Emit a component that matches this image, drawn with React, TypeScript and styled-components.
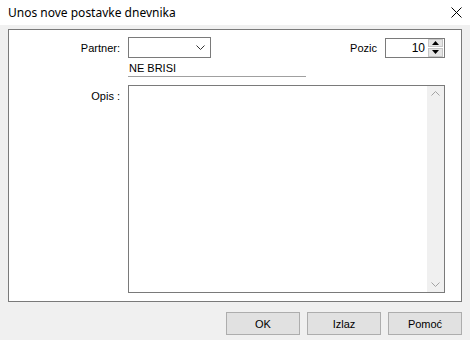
import React from 'react';
import styled, { createGlobalStyle } from 'styled-components';

const GlobalStyle = createGlobalStyle`
  html, body {
    margin: 0;
    padding: 0;
    background: #f0f0f0;
  }
  body {
    font-family: "Liberation Sans", Arial, sans-serif;
    font-size: 11px;
    color: #000;
  }
`;

const Window = styled.div`
  width: 470px;
  height: 340px;
  display: flex;
  flex-direction: column;
  background: #f0f0f0;
  overflow: hidden;
`;

const TitleBar = styled.div`
  height: 25px;
  flex: none;
  background: #fff;
  display: flex;
  align-items: center;
  justify-content: space-between;
  padding: 0 8px 0 8px;
`;

const Title = styled.span`
  font-family: "Noto Sans", "Open Sans", sans-serif;
  font-size: 12px;
  color: #000;
  line-height: 1;
`;

const CloseButton = styled.button`
  border: 0;
  background: transparent;
  padding: 0;
  width: 12px;
  height: 12px;
  display: flex;
  align-items: center;
  justify-content: center;
`;

const Body = styled.div`
  flex: 1;
  display: flex;
  flex-direction: column;
  padding: 4px 8px 0 8px;
`;

const Panel = styled.div`
  height: 273px;
  box-sizing: border-box;
  background: #fff;
  border: 1px solid #7a7a7a;
  padding: 7px 16px 0 0;
  display: grid;
  grid-template-columns: 119px 1fr;
  grid-template-rows: 21px 20px 208px;
  row-gap: 0;
`;

const Label = styled.label<{ $top?: number }>`
  text-align: right;
  padding-right: 8px;
  padding-top: ${(p) => p.$top ?? 0}px;
  align-self: ${(p) => (p.$top ? 'start' : 'center')};
  white-space: nowrap;
`;

const TopRow = styled.div`
  display: flex;
  align-items: center;
`;

const Combo = styled.div`
  width: 83px;
  height: 21px;
  box-sizing: border-box;
  border: 1px solid #7a7a7a;
  background: #fff;
  display: flex;
  align-items: center;
  justify-content: flex-end;
  padding-right: 5px;
`;

const PozicGroup = styled.div`
  margin-left: auto;
  display: flex;
  align-items: center;
  gap: 8px;
`;

const Spin = styled.div`
  width: 60px;
  height: 20px;
  box-sizing: border-box;
  border: 1px solid #7a7a7a;
  background: #fff;
  display: flex;
  align-items: center;
`;

const SpinValue = styled.span`
  flex: 1;
  text-align: right;
  padding-right: 3px;
  font-size: 12px;
`;

const SpinButtons = styled.div`
  width: 15px;
  height: 18px;
  display: flex;
  flex-direction: column;
  gap: 1px;
  margin-right: 1px;
`;

const SpinBtn = styled.div`
  flex: 1;
  background: #e5e5e5;
  border: 1px solid #c5c5c5;
  box-sizing: border-box;
  display: flex;
  align-items: center;
  justify-content: center;
`;

const Readonly = styled.div`
  margin-top: 4px;
  width: 178px;
  height: 15px;
  box-sizing: border-box;
  border-bottom: 1px solid #a0a0a0;
  padding-left: 1px;
  line-height: 13px;
`;

const Memo = styled.div`
  margin-top: 7px;
  height: 208px;
  box-sizing: border-box;
  border: 1px solid #7a7a7a;
  background: #fff;
  display: flex;
  justify-content: flex-end;
`;

const ScrollTrack = styled.div`
  width: 17px;
  background: #f0f0f0;
  display: flex;
  flex-direction: column;
  justify-content: space-between;
  align-items: center;
  padding: 5px 0;
`;

const Footer = styled.div`
  display: flex;
  justify-content: flex-end;
  gap: 7px;
  margin-top: 10px;
`;

const Button = styled.button`
  width: 74px;
  height: 23px;
  box-sizing: border-box;
  background: #e1e1e1;
  border: 1px solid #adadad;
  font-family: "Liberation Sans", Arial, sans-serif;
  font-size: 11px;
  color: #000;
  padding: 0;
`;

const Chevron = ({ up, color }: { up?: boolean; color: string }) => (
  <svg width="9" height="5" viewBox="0 0 9 5">
    <path
      d={up ? 'M0.5 4.5 L4.5 0.5 L8.5 4.5' : 'M0.5 0.5 L4.5 4.5 L8.5 0.5'}
      fill="none"
      stroke={color}
      strokeWidth="1"
    />
  </svg>
);

const Tri = ({ up }: { up?: boolean }) => (
  <svg width="7" height="4" viewBox="0 0 7 4">
    <path d={up ? 'M0 4 L3.5 0 L7 4 Z' : 'M0 0 L3.5 4 L7 0 Z'} fill="#000" />
  </svg>
);

export default function App() {
  return (
    <Window>
      <GlobalStyle />
      <TitleBar>
        <Title>Unos nove postavke dnevnika</Title>
        <CloseButton aria-label="close">
          <svg width="11" height="11" viewBox="0 0 11 11">
            <path d="M0.5 0.5 L10.5 10.5 M10.5 0.5 L0.5 10.5" stroke="#000" strokeWidth="1" />
          </svg>
        </CloseButton>
      </TitleBar>
      <Body>
        <Panel>
          <Label>Partner:</Label>
          <TopRow>
            <Combo>
              <Chevron color="#333" />
            </Combo>
            <PozicGroup>
              <span>Pozic</span>
              <Spin>
                <SpinValue>10</SpinValue>
                <SpinButtons>
                  <SpinBtn>
                    <Tri up />
                  </SpinBtn>
                  <SpinBtn>
                    <Tri />
                  </SpinBtn>
                </SpinButtons>
              </Spin>
            </PozicGroup>
          </TopRow>
          <span />
          <Readonly>NE BRISI</Readonly>
          <Label $top={12}>Opis :</Label>
          <Memo>
            <ScrollTrack>
              <Chevron up color="#a3a3a3" />
              <Chevron color="#a3a3a3" />
            </ScrollTrack>
          </Memo>
        </Panel>
        <Footer>
          <Button>OK</Button>
          <Button>Izlaz</Button>
          <Button>Pomoć</Button>
        </Footer>
      </Body>
    </Window>
  );
}
